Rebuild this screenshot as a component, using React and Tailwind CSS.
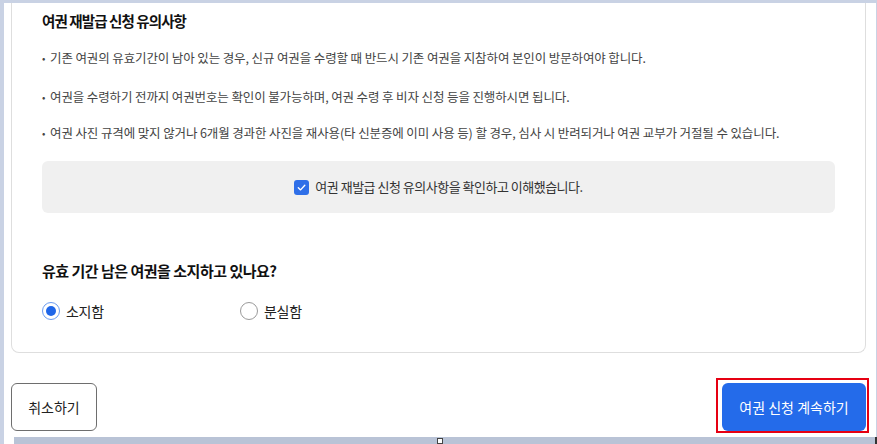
import React from "react";

const notices = [
    "기존 여권의 유효기간이 남아 있는 경우, 신규 여권을 수령할 때 반드시 기존 여권을 지참하여 본인이 방문하여야 합니다.",
    "여권을 수령하기 전까지 여권번호는 확인이 불가능하며, 여권 수령 후 비자 신청 등을 진행하시면 됩니다.",
    "여권 사진 규격에 맞지 않거나 6개월 경과한 사진을 재사용(타 신분증에 이미 사용 등) 할 경우, 심사 시 반려되거나 여권 교부가 거절될 수 있습니다.",
];

const noticeGaps = ["mt-[16px]", "mt-[19px]", "mt-[16px]"];

function Radio({ checked, label }) {
    return (
        <label className="flex items-center gap-[6px] h-[22px]">
            {checked ? (
                <span className="w-[18px] h-[18px] rounded-full border border-[#6b9cf0] flex items-center justify-center">
                    <span className="w-[10px] h-[10px] rounded-full bg-[#1f66e8]" />
                </span>
            ) : (
                <span className="w-[18px] h-[18px] rounded-full border border-[#9a9a9a] bg-white" />
            )}
            <span className="text-[14px] text-[#222] tracking-[-0.3px]">{label}</span>
        </label>
    );
}

export default function App() {
    return (
        <div
            className="relative w-[877px] h-[444px] overflow-hidden bg-[#c9d2e4] flex"
            style={{ fontFamily: '"Noto Sans CJK KR", "Noto Sans", sans-serif' }}
        >
            <div className="w-[4px] shrink-0" />
            <div className="w-[872px] flex flex-col">
                <div className="h-[3px] shrink-0" />
                <div className="h-[434px] bg-white pl-[7px] pr-[10px] flex flex-col">
                    {/* notice card */}
                    <div className="border-x border-b border-[#dedede] rounded-b-lg px-[30px] pt-[7px] pb-[30px]">
                        <h2 className="text-[14.5px] leading-[22px] font-bold text-[#111] tracking-[-0.9px]">
                            여권 재발급 신청 유의사항
                        </h2>
                        {notices.map((n, i) => (
                            <p key={i} className={`${noticeGaps[i]} flex text-[12.5px] leading-[20px] text-[#444] tracking-[-0.12px]`}>
                                <span className="w-[8px] shrink-0 text-[10px]">•</span>
                                <span>{n}</span>
                            </p>
                        ))}
                        <div className="mt-[18px] h-[52px] rounded-md bg-[#f0f0f0] flex items-center justify-center gap-[6px]">
                            <span className="w-[15px] h-[15px] rounded-[3px] bg-[#2f6fe8] flex items-center justify-center">
                                <svg viewBox="0 0 12 12" className="w-[11px] h-[11px]" fill="none" stroke="white" strokeWidth="1.5" strokeLinecap="round" strokeLinejoin="round">
                                    <path d="M2.5 6.2 L5 8.6 L9.6 3.6" />
                                </svg>
                            </span>
                            <span className="text-[13px] text-[#333] tracking-[-0.5px]">여권 재발급 신청 유의사항을 확인하고 이해했습니다.</span>
                        </div>
                        <h3 className="mt-[47px] text-[15px] leading-[22px] font-bold text-[#111] tracking-[-0.5px]">
                            유효 기간 남은 여권을 소지하고 있나요?
                        </h3>
                        <div className="mt-[18px] grid grid-cols-[198px_198px]">
                            <Radio checked label="소지함" />
                            <Radio label="분실함" />
                        </div>
                    </div>

                    {/* actions */}
                    <div className="mt-[30px] flex justify-between">
                        <button className="w-[86px] h-[48px] rounded-md border border-[#6e6e6e] bg-white text-[14px] text-[#222]">
                            취소하기
                        </button>
                        <div className="relative">
                            <button className="w-[144px] h-[48px] rounded-md bg-[#246bea] text-[14px] text-white">
                                여권 신청 계속하기
                            </button>
                            <span className="absolute -left-[6px] -top-[5px] -right-[3px] -bottom-[2px] border-2 border-[#e60012] pointer-events-none" />
                        </div>
                    </div>
                </div>
                <div className="flex-1 flex">
                    <div className="w-[10px] bg-white" />
                    <div className="flex-1 bg-[#b9c3d6]" />
                </div>
            </div>
            <span className="absolute left-[437px] top-[438px] w-[6px] h-[6px] border border-[#444] bg-white" />
            <span className="absolute left-[875px] top-[437px] w-[2px] h-[7px] bg-[#333]" />
        </div>
    );
}
